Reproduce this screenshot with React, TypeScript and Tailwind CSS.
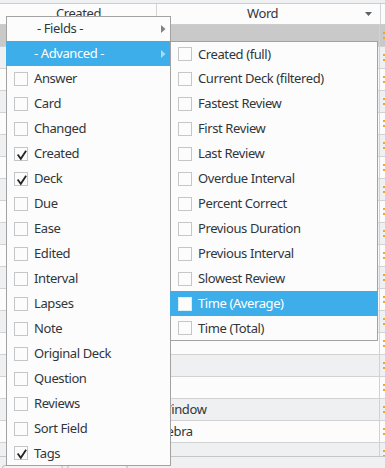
import React from "react";

const fields = [
  "Answer",
  "Card",
  "Changed",
  "Created",
  "Deck",
  "Due",
  "Ease",
  "Edited",
  "Interval",
  "Lapses",
  "Note",
  "Original Deck",
  "Question",
  "Reviews",
  "Sort Field",
  "Tags",
];
const checked = new Set(["Created", "Deck", "Tags"]);
const adv = [
  "Created (full)",
  "Current Deck (filtered)",
  "Fastest Review",
  "First Review",
  "Last Review",
  "Overdue Interval",
  "Percent Correct",
  "Previous Duration",
  "Previous Interval",
  "Slowest Review",
  "Time (Average)",
  "Time (Total)",
];

function Check() {
  return (
    <svg width="14" height="14" viewBox="0 0 14 14" className="block">
      <path d="M3.2 7.2 L5.8 10.8 L10.6 3.4" fill="none" stroke="#232629" strokeWidth="1.8" strokeLinecap="square" />
    </svg>
  );
}

function Item({ label, on, hl, h }: { label: string; on: boolean; hl?: boolean; h: string }) {
  return (
    <div className={`flex items-center ${h} ${hl ? "bg-[#3daee9] text-white -mx-px px-px" : "text-[#31363b]"}`}>
      <div className={`ml-[7px] w-[14px] h-[14px] border bg-[#fcfcfc] ${hl ? "border-[#d8eef9]" : "border-[#c4c6c8]"} shrink-0`}>
        {on ? <Check /> : null}
      </div>
      <span className="ml-[6px] whitespace-nowrap leading-none">{label}</span>
    </div>
  );
}

function Arrow({ color }: { color: string }) {
  return (
    <svg width="5" height="8" viewBox="0 0 5 8" className="block">
      <path d="M0 0 L4.5 4 L0 8 Z" fill={color} />
    </svg>
  );
}

function Marks() {
  return (
    <svg width="5" height="22" viewBox="0 0 5 22" className="block">
      <rect x="3" y="7" width="2" height="2" fill="#f5a623" />
      <rect x="3" y="12" width="2" height="2" fill="#f5a623" />
    </svg>
  );
}

export default function App() {
  const rows = Array.from({ length: 20 }, (_, i) => i);
  const words: Record<number, string> = { 17: "Window", 18: "Zebra" };
  return (
    <div className="relative w-[385px] h-[468px] overflow-hidden bg-[#eff0f1] font-['Noto_Sans',sans-serif] text-[13px] tracking-[-0.4px] text-[#31363b]">
      {/* table */}
      <div className="h-[3px]" />
      <div className="flex h-[22px] border-y border-[#cdcdcd] bg-[#fcfcfc]">
        <div className="w-[157px] border-r border-[#d4d4d4] flex items-center justify-center pl-[1px]">Created</div>
        <div className="w-[224px] border-r border-[#d4d4d4] flex items-center relative">
          <span className="ml-[90px]">Word</span>
          <svg width="7" height="4" viewBox="0 0 7 4" className="absolute left-[208px] top-[8px]">
            <path d="M0 0 L7 0 L3.5 4 Z" fill="#5d6165" />
          </svg>
        </div>
        <div className="flex-1" />
      </div>
      <div className="h-[432px] overflow-hidden border-b border-[#c6c6c6] bg-[#fcfcfc]">
        {rows.map((i) => (
          <div
            key={i}
            className={`flex h-[22px] border-b border-[#d2d2d2] ${
              i === 0 ? "bg-[#c9c9c9]" : i % 2 === 1 ? "bg-[#eff0f1]" : "bg-[#fcfcfc]"
            }`}
          >
            <div className="w-[157px]" />
            <div className="w-[224px] border-r border-[#d2d2d2] flex items-center pl-[3px] whitespace-nowrap">
              {words[i] ?? ""}
            </div>
            <div className="flex-1">
              <Marks />
            </div>
          </div>
        ))}
      </div>
      <div className="flex gap-[4px] pl-[2px] pt-[8px]">
        <div className="w-[61px] h-[10px] rounded-t-[3px] border border-[#bcbcbc] bg-[#f4f4f4]" />
        <div className="w-[61px] h-[10px] rounded-t-[3px] border border-[#bcbcbc] bg-[#f4f4f4]" />
      </div>

      {/* main menu */}
      <div className="absolute left-[6px] top-[16px] w-[165px] border border-[#a2a2a2] bg-[#fcfcfc]">
        <div className="flex items-center h-[24px] text-[#31363b]">
          <span className="ml-[30px] whitespace-nowrap">- Fields -</span>
          <div className="ml-auto mr-[4px]">
            <Arrow color="#7f8385" />
          </div>
        </div>
        <div className="flex items-center h-[25px] bg-[#3daee9] text-white -mx-px px-px">
          <span className="ml-[27px] whitespace-nowrap">- Advanced -</span>
          <div className="ml-auto mr-[4px]">
            <Arrow color="#a9dbf5" />
          </div>
        </div>
        {fields.map((f, i) => (
          <Item key={f} label={f} on={checked.has(f)} h={i === fields.length - 1 ? "h-[24px]" : "h-[25px]"} />
        ))}
      </div>

      {/* submenu */}
      <div className="absolute left-[170px] top-[41px] w-[208px] border border-[#a2a2a2] bg-[#fcfcfc]">
        {adv.map((f, i) => (
          <Item
            key={f}
            label={f}
            on={false}
            hl={f === "Time (Average)"}
            h={i === 0 || i === adv.length - 1 ? "h-[24px]" : "h-[25px]"}
          />
        ))}
      </div>
    </div>
  );
}
